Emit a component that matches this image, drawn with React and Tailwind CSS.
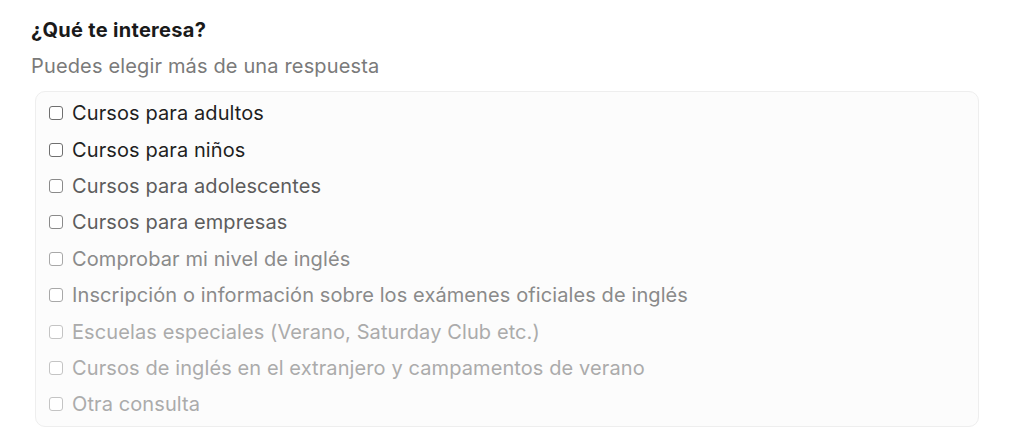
const options = [
  { label: 'Cursos para adultos', text: 'text-[#1f1f1f]', box: 'border-[#6f6f6f]' },
  { label: 'Cursos para niños', text: 'text-[#1f1f1f]', box: 'border-[#6f6f6f]' },
  { label: 'Cursos para adolescentes', text: 'text-[#5c5c5c]', box: 'border-[#8a8a8a]' },
  { label: 'Cursos para empresas', text: 'text-[#5c5c5c]', box: 'border-[#8a8a8a]' },
  { label: 'Comprobar mi nivel de inglés', text: 'text-[#8a8a8a]', box: 'border-[#a8a8a8]' },
  { label: 'Inscripción o información sobre los exámenes oficiales de inglés', text: 'text-[#8a8a8a]', box: 'border-[#a8a8a8]' },
  { label: 'Escuelas especiales (Verano, Saturday Club etc.)', text: 'text-[#ababab]', box: 'border-[#c4c4c4]' },
  { label: 'Cursos de inglés en el extranjero y campamentos de verano', text: 'text-[#ababab]', box: 'border-[#c4c4c4]' },
  { label: 'Otra consulta', text: 'text-[#ababab]', box: 'border-[#c4c4c4]' },
]

const App = () => {
  return (
    <div className="min-h-[443px] bg-white pl-[31px] pr-[45px] pt-[17px]" style={{ fontFamily: 'Inter, "Noto Sans", sans-serif' }}>
      <h2 className="text-[20px] font-bold leading-[26px] tracking-[0.3px] text-[#1a1a1a]">¿Qué te interesa?</h2>
      <p className="mt-[11px] text-[20px] leading-[24px] tracking-[0.15px] text-[#7a7a7a]">Puedes elegir más de una respuesta</p>
      <div className="ml-[4px] mt-[13px] rounded-[10px] border border-[#eeeeee] bg-[#fcfcfc] pb-[3px] pl-[13px] pt-[3px]">
        {options.map((o) => (
          <label key={o.label} className="flex h-[36.4px] items-center gap-[9px] cursor-pointer">
            <span className={`h-[14px] w-[14px] shrink-0 rounded-[3px] border bg-white ${o.box}`} />
            <span className={`text-[20px] tracking-[0.1px] ${o.text}`}>{o.label}</span>
          </label>
        ))}
      </div>
    </div>
  )
}

export default App
